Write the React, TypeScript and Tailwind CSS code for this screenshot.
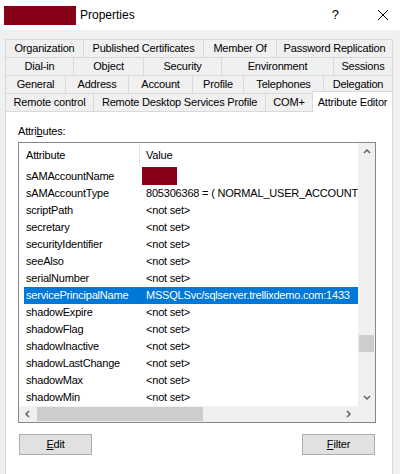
import React from "react";

type Tab = [string, number];

const tabRows: Tab[][] = [
  [["Organization", 78], ["Published Certificates", 120], ["Member Of", 73], ["Password Replication", 117]],
  [["Dial-in", 68], ["Object", 70], ["Security", 78], ["Environment", 112], ["Sessions", 60]],
  [["General", 60], ["Address", 63], ["Account", 64], ["Profile", 51], ["Telephones", 80], ["Delegation", 70]],
  [["Remote control", 88], ["Remote Desktop Services Profile", 172], ["COM+", 47]],
];

const rows: { name: string; value: string | null }[] = [
  { name: "sAMAccountName", value: null },
  { name: "sAMAccountType", value: "805306368 = ( NORMAL_USER_ACCOUNT )" },
  { name: "scriptPath", value: "<not set>" },
  { name: "secretary", value: "<not set>" },
  { name: "securityIdentifier", value: "<not set>" },
  { name: "seeAlso", value: "<not set>" },
  { name: "serialNumber", value: "<not set>" },
  { name: "servicePrincipalName", value: "MSSQLSvc/sqlserver.trellixdemo.com:1433" },
  { name: "shadowExpire", value: "<not set>" },
  { name: "shadowFlag", value: "<not set>" },
  { name: "shadowInactive", value: "<not set>" },
  { name: "shadowLastChange", value: "<not set>" },
  { name: "shadowMax", value: "<not set>" },
  { name: "shadowMin", value: "<not set>" },
];

function Chevron({ dir }: { dir: "up" | "down" | "left" | "right" }) {
  const d = {
    up: "M1 5 L4 2 L7 5",
    down: "M1 2 L4 5 L7 2",
    left: "M5 1 L2 4 L5 7",
    right: "M2 1 L5 4 L2 7",
  }[dir];
  return (
    <svg width="8" height="8" viewBox="0 0 8 8">
      <path d={d} fill="none" stroke="#606060" strokeWidth="1.5" />
    </svg>
  );
}

export default function App() {
  return (
    <div className="w-[400px] h-[474px] overflow-hidden flex flex-col bg-[#f0f0f0] text-black text-[11px] tracking-[-0.2px] font-['Liberation_Sans',Arial,sans-serif]">
      {/* title bar */}
      <div className="h-[30px] bg-white flex items-center shrink-0 tracking-normal">
        <div className="ml-[4px] w-[72px] h-[19px] bg-[#880018]" />
        <span className="ml-[4px] text-[12px]">Properties</span>
        <span className="ml-auto mr-[38px] text-[13px]">?</span>
        <svg width="12" height="12" viewBox="0 0 12 12" className="mr-[11px]">
          <path d="M1 1 L11 11 M11 1 L1 11" stroke="#000" strokeWidth="1" />
        </svg>
      </div>

      {/* tabs */}
      <div className="pt-[9px] pl-[5px] shrink-0">
        {tabRows.map((row, i) => (
          <div key={i} className="flex h-[18px]">
            {row.map(([label, w], j) => (
              <div
                key={label}
                style={{ width: w }}
                className={
                  "h-[18px] border-t border-l border-[#d9d9d9] flex items-center justify-center whitespace-nowrap" +
                  (j === row.length - 1 && i < 3 ? " border-r" : "")
                }
              >
                {label}
              </div>
            ))}
            {i === 3 && (
              <div className="relative z-10 -mt-[2px] w-[81px] h-[21px] bg-white border-t border-l border-r border-[#d9d9d9] flex items-center justify-center whitespace-nowrap">
                Attribute Editor
              </div>
            )}
          </div>
        ))}
      </div>

      {/* panel */}
      <div className="flex-1 ml-[5px] mr-[7px] bg-white border-t border-x border-[#d9d9d9] pt-[12px] px-[12px]">
        <div className="leading-[15px] h-[15px]">
          Attri<u>b</u>utes:
        </div>

        <div className="mt-[3px] w-[358px] h-[281px] border border-[#828790] grid grid-cols-[1fr_17px] grid-rows-[1fr_16px]">
          {/* list content */}
          <div className="overflow-hidden">
            <div className="h-[25px] flex items-center">
              <div className="w-[120px] pl-[7px]">Attribute</div>
              <div className="w-px h-[21px] bg-[#e5e5e5]" />
              <div className="pl-[6px]">Value</div>
            </div>
            {rows.map((r) => {
              const sel = r.name === "servicePrincipalName";
              return (
                <div
                  key={r.name}
                  className={
                    "h-[17px] leading-[17px] flex whitespace-nowrap ml-[5px] " +
                    (sel ? "bg-[#0078d7] text-white" : "")
                  }
                >
                  <div className="w-[116px] pl-[2px] shrink-0">{r.name}</div>
                  {r.value === null ? (
                    <div className="ml-[2px] -mt-px w-[35px] h-[18px] bg-[#880018]" />
                  ) : (
                    <div className="pl-[6px] overflow-hidden">{r.value}</div>
                  )}
                </div>
              );
            })}
          </div>

          {/* vertical scrollbar */}
          <div className="bg-[#f0f0f0] flex flex-col items-center">
            <div className="h-[17px] flex items-center justify-center">
              <Chevron dir="up" />
            </div>
            <div className="h-[175px]" />
            <div className="w-[15px] h-[17px] bg-[#cdcdcd]" />
            <div className="flex-1" />
            <div className="h-[17px] flex items-center justify-center">
              <Chevron dir="down" />
            </div>
          </div>

          {/* horizontal scrollbar */}
          <div className="bg-[#f0f0f0] flex items-center">
            <div className="w-[18px] flex items-center justify-center">
              <Chevron dir="left" />
            </div>
            <div className="w-[166px] h-[14px] bg-[#cdcdcd]" />
            <div className="flex-1" />
            <div className="w-[18px] flex items-center justify-center">
              <Chevron dir="right" />
            </div>
          </div>
          <div className="bg-[#f0f0f0]" />
        </div>

        {/* buttons */}
        <div className="mt-[11px] w-[357px] pl-[1px] flex justify-between">
          <button className="w-[73px] h-[21px] bg-[#e1e1e1] border border-[#adadad] text-[11px]">
            <u>E</u>dit
          </button>
          <button className="w-[73px] h-[21px] bg-[#e1e1e1] border border-[#adadad] text-[11px]">
            <u>F</u>ilter
          </button>
        </div>
      </div>
    </div>
  );
}
